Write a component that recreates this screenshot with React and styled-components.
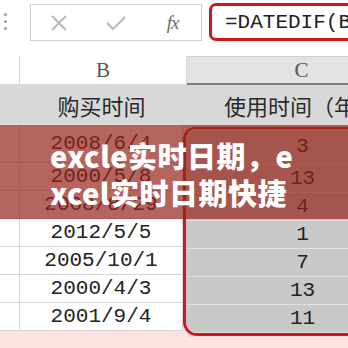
import React from 'react'
import styled, { createGlobalStyle } from 'styled-components'

const Global = createGlobalStyle`
html, body {
    margin: 0;
    padding: 0;
    background: #fde1e1;
}
body {
    width: 348px;
    height: 348px;
    overflow: hidden;
    font-family: "Liberation Sans", "Noto Sans CJK SC", sans-serif;
}
`

const Page = styled.div`
position: relative;
width: 348px;
height: 348px;
overflow: hidden;
background: #fde1e1;
`

const FormulaBar = styled.div`
display: flex;
align-items: center;
height: 56px;
background: #fff;
padding: 0 0 14px 0;
box-sizing: border-box;
`

const Grip = styled.div`
display: flex;
flex-direction: column;
gap: 4px;
width: 30px;
padding-left: 4px;
box-sizing: border-box;
span{
    width: 3px;
    height: 3px;
    background: #9a9a9a;
    border-radius: 50%;
}
`

const ButtonBox = styled.div`
display: grid;
grid-template-columns: repeat(3, 1fr);
align-items: center;
justify-items: center;
width: 172px;
height: 37px;
border: 1px solid #cfcfcf;
box-sizing: border-box;
margin-top: 3px;
`

const Fx = styled.span`
font-family: "Liberation Serif", serif;
font-style: italic;
font-size: 19px;
color: #6a6a6a;
letter-spacing: -1px;
`

const FormulaInput = styled.div`
margin-left: 7px;
flex: 1;
height: 38px;
border: 3px solid #d3161e;
border-right: 0;
border-radius: 7px 0 0 7px;
box-sizing: border-box;
display: flex;
align-items: center;
padding-left: 13px;
font-family: "Liberation Mono", monospace;
font-size: 21px;
color: #222;
white-space: nowrap;
overflow: hidden;
margin-top: 2px;
`

const ColHeader = styled.div`
display: flex;
height: 29px;
`

const ColLabel = styled.div`
width: ${p => p.$w}px;
flex: none;
box-sizing: border-box;
display: flex;
align-items: center;
justify-content: center;
font-family: "Liberation Serif", serif;
font-size: 21px;
color: #555;
background: ${p => p.$active ? '#e2e2e2' : '#fff'};
border-top: ${p => p.$active ? '1px solid #cfcfcf' : '0'};
border-right: 1px solid #d6d6d6;
border-bottom: ${p => p.$active ? '2px solid #7b7b7b' : '1px solid #d6d6d6'};
`

const TitleRow = styled.div`
display: flex;
height: 40px;
background: #d8d8d8;
`

const TitleCell = styled.div`
width: ${p => p.$w}px;
flex: none;
display: flex;
align-items: center;
justify-content: center;
font-family: "Noto Sans CJK SC", sans-serif;
font-size: 22px;
color: #2a2a2a;
white-space: nowrap;
`

const Body = styled.div`
display: flex;
align-items: flex-start;
`

const Column = styled.div`
width: ${p => p.$w}px;
flex: none;
display: flex;
flex-direction: column;
box-sizing: border-box;
`

const SelectedColumn = styled(Column)`
border: 3px solid #d3161e;
border-top-width: 2px;
border-right: 0;
border-radius: 12px 0 0 14px;
overflow: hidden;
margin-top: 2px;
`

const Cell = styled.div`
height: ${p => p.$h}px;
box-sizing: border-box;
display: flex;
align-items: center;
justify-content: center;
font-family: "Liberation Mono", monospace;
font-size: 21px;
color: #222;
background: ${p => p.$sel ? '#c8c8c8' : '#fff'};
border-bottom: 1px solid ${p => p.$sel ? '#e0e0e0' : '#d6d6d6'};
border-right: ${p => p.$sel ? '0' : '1px solid #d6d6d6'};
`

const Banner = styled.div`
position: absolute;
left: 0;
top: 125px;
width: 348px;
height: 94px;
background: rgba(150, 35, 25, 0.7);
box-sizing: border-box;
padding: 12px 0 0 50px;
`

const BannerText = styled.div`
width: 252px;
font-family: "Noto Sans CJK SC", sans-serif;
font-weight: 900;
font-size: 29px;
letter-spacing: 0.5px;
line-height: 37px;
color: #fff;
word-break: break-all;
`

const dates = ['2008/6/4', '2000/5/8', '2008/8/29', '2012/5/5', '2005/10/1', '2000/4/3', '2001/9/4']
const years = ['3', '13', '4', '1', '7', '13', '11']
const heights = [38, 28, 28, 28, 28, 28, 28]

export default function App() {
    return (
        <Page>
            <Global />
            <FormulaBar>
                <Grip><span /><span /><span /></Grip>
                <ButtonBox>
                    <svg width="20" height="20" viewBox="0 0 20 20">
                        <path d="M3 3 L17 17 M17 3 L3 17" stroke="#b8b8b8" strokeWidth="2" fill="none" />
                    </svg>
                    <svg width="22" height="18" viewBox="0 0 22 18">
                        <path d="M2 9 L8 15 L20 3" stroke="#b8b8b8" strokeWidth="2" fill="none" />
                    </svg>
                    <Fx>fx</Fx>
                </ButtonBox>
                <FormulaInput>=DATEDIF(B2,TODAY(),"y")</FormulaInput>
            </FormulaBar>

            <ColHeader>
                <ColLabel $w={20} />
                <ColLabel $w={167}>B</ColLabel>
                <ColLabel $w={230} $active>C</ColLabel>
            </ColHeader>

            <TitleRow>
                <TitleCell $w={20} />
                <TitleCell $w={163}>购买时间</TitleCell>
                <TitleCell $w={236}>使用时间（年）</TitleCell>
            </TitleRow>

            <Body>
                <Column $w={20}>
                    {heights.map((h, i) => <Cell key={i} $h={h} />)}
                </Column>
                <Column $w={163}>
                    {dates.map((d, i) => <Cell key={i} $h={heights[i]}>{d}</Cell>)}
                </Column>
                <SelectedColumn $w={236}>
                    {years.map((y, i) => <Cell key={i} $sel $h={i === 0 ? heights[i] - 2 : heights[i]}>{y}</Cell>)}
                </SelectedColumn>
            </Body>

            <Banner>
                <BannerText>excle实时日期，excel实时日期快捷</BannerText>
            </Banner>
        </Page>
    )
}
